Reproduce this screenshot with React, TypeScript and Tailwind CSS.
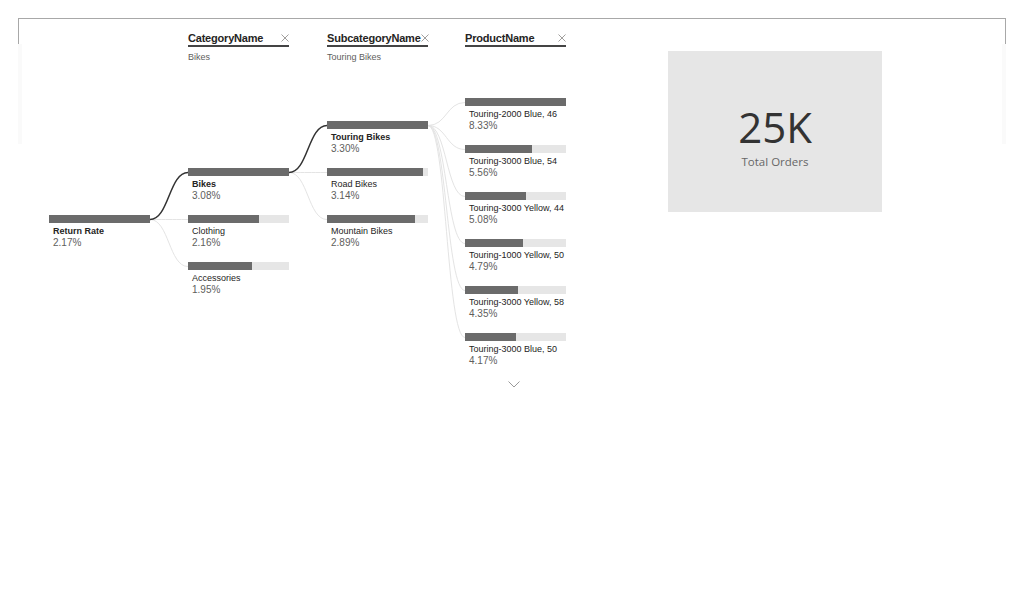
import React from 'react';

type TreeNode = {
  label: string;
  value: string;
  fill: number; // px of the 101px track
  selected?: boolean;
};

interface Column {
  header?: string;
  subtitle?: string;
  offset: string; // top padding class for the first bar
  nodes: TreeNode[];
  className: string;
}

const columns: Column[] = [
  {
    offset: 'pt-[151px]',
    className: 'w-[101px]',
    nodes: [{ label: 'Return Rate', value: '2.17%', fill: 101, selected: true }],
  },
  {
    header: 'CategoryName',
    subtitle: 'Bikes',
    offset: 'pt-[104px]',
    className: 'w-[101px] ml-[38px]',
    nodes: [
      { label: 'Bikes', value: '3.08%', fill: 101, selected: true },
      { label: 'Clothing', value: '2.16%', fill: 71 },
      { label: 'Accessories', value: '1.95%', fill: 64 },
    ],
  },
  {
    header: 'SubcategoryName',
    subtitle: 'Touring Bikes',
    offset: 'pt-[57px]',
    className: 'w-[101px] ml-[38px]',
    nodes: [
      { label: 'Touring Bikes', value: '3.30%', fill: 101, selected: true },
      { label: 'Road Bikes', value: '3.14%', fill: 96 },
      { label: 'Mountain Bikes', value: '2.89%', fill: 88 },
    ],
  },
  {
    header: 'ProductName',
    offset: 'pt-[34px]',
    className: 'w-[101px] ml-[37px] overflow-hidden',
    nodes: [
      { label: 'Touring-2000 Blue, 46', value: '8.33%', fill: 101 },
      { label: 'Touring-3000 Blue, 54', value: '5.56%', fill: 67 },
      { label: 'Touring-3000 Yellow, 44', value: '5.08%', fill: 61 },
      { label: 'Touring-1000 Yellow, 50', value: '4.79%', fill: 58 },
      { label: 'Touring-3000 Yellow, 58', value: '4.35%', fill: 53 },
      { label: 'Touring-3000 Blue, 50', value: '4.17%', fill: 51 },
    ],
  },
];

// S-shaped link between the end of one bar and the start of the next
const link = (x1: number, y1: number, x2: number, y2: number) => {
  const mx = (x1 + x2) / 2;
  return `M${x1},${y1} C${mx},${y1} ${mx},${y2} ${x2},${y2}`;
};

const Close = () => (
  <svg width="8" height="8" viewBox="0 0 8 8" className="shrink-0">
    <path d="M0.5 0.5 L7.5 7.5 M7.5 0.5 L0.5 7.5" stroke="#a19f9d" strokeWidth="1" />
  </svg>
);

const Connectors = () => {
  const light = [
    link(150, 219.5, 188, 219.5),
    link(150, 219.5, 188, 266.5),
    link(289, 172.5, 327, 172.5),
    link(289, 172.5, 327, 219.5),
    ...[102, 149, 196, 243, 290, 337].map((y) => link(428, 125.5, 465, y + 0.5)),
  ];
  return (
    <svg className="absolute left-0 top-0 pointer-events-none" width="1024" height="592">
      {light.map((d, i) => (
        <path key={i} d={d} fill="none" stroke="#e4e4e4" strokeWidth="1" />
      ))}
      <path d={link(150, 219.5, 188, 172.5)} fill="none" stroke="#333333" strokeWidth="1.5" />
      <path d={link(289, 172.5, 327, 125.5)} fill="none" stroke="#333333" strokeWidth="1.5" />
    </svg>
  );
};

const Node = ({ node }: { node: TreeNode }) => (
  <div className="h-[47px] flex flex-col">
    <div className="h-[8px] w-[101px] bg-[#e6e6e6] shrink-0">
      <div className="h-full bg-[#6b6b6b]" style={{ width: node.fill }} />
    </div>
    <div
      className={`mt-[3px] pl-[4px] text-[9px] leading-[11px] whitespace-nowrap text-[#252423] ${
        node.selected ? 'font-bold' : ''
      }`}
    >
      {node.label}
    </div>
    <div className="pl-[4px] text-[10px] leading-[11px] text-[#605e5c]">{node.value}</div>
  </div>
);

const TreeColumn = ({ col, last }: { col: Column; last: boolean }) => (
  <div className={`relative flex flex-col shrink-0 ${col.className}`}>
    {/* header */}
    <div className="h-[34px] pt-[1px]">
      {col.header && (
        <>
          <div className="flex items-center justify-between h-[16px] border-b-2 border-[#444444]">
            <span className="text-[11px] leading-[14px] font-bold tracking-[-0.2px] text-[#252423] whitespace-nowrap">
              {col.header}
            </span>
            <Close />
          </div>
          {col.subtitle && (
            <div className="mt-[5px] text-[9px] leading-[11px] text-[#605e5c]">{col.subtitle}</div>
          )}
        </>
      )}
    </div>
    <div className={col.offset}>
      {col.nodes.map((n) => (
        <Node key={n.label} node={n} />
      ))}
    </div>
    {last && (
      <div className="pl-[43px] mt-[1px]">
        <svg width="12" height="7" viewBox="0 0 12 7">
          <path d="M0.5 0.5 L6 6 L11.5 0.5" fill="none" stroke="#9a9a9a" strokeWidth="1" />
        </svg>
      </div>
    )}
  </div>
);

export default function App() {
  return (
    <div className="relative w-[1024px] h-[592px] bg-white overflow-hidden font-['Liberation_Sans',Arial,sans-serif]">
      {/* visual frame */}
      <div className="absolute left-[18px] top-[18px] w-[988px] h-[26px] border-t border-x border-[#a8a8a8]" />
      <div className="absolute left-[18px] top-[44px] w-[988px] h-[100px] border-x-4 border-[#fafafa]" />

      <Connectors />

      <div className="relative flex items-start pt-[30px] pl-[49px]">
        {columns.map((c, i) => (
          <TreeColumn key={i} col={c} last={i === columns.length - 1} />
        ))}

        {/* KPI card */}
        <div className="ml-[102px] mt-[21px] w-[214px] h-[161px] bg-[#e6e6e6] flex flex-col items-center pt-[55px] font-['Open_Sans',sans-serif]">
          <div className="text-[42px] leading-[42px] text-[#333333]">25K</div>
          <div className="mt-[6px] text-[11.5px] leading-[16px] text-[#666666]">Total Orders</div>
        </div>
      </div>
    </div>
  );
}
